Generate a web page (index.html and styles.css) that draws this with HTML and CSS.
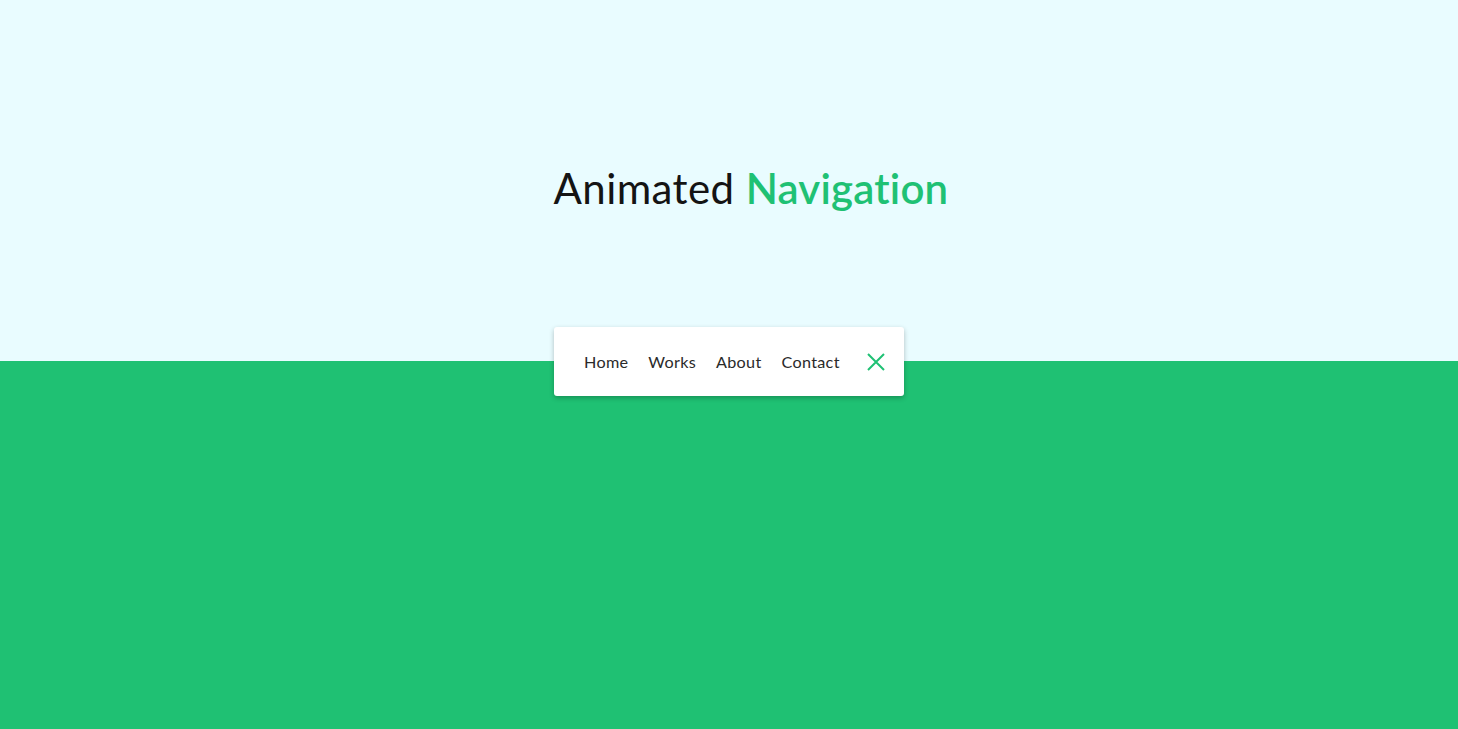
FILE: index.html
```html
<!DOCTYPE html>
<html lang="en">
<head>
<meta charset="utf-8">
<title>Animated Navigation</title>
<link rel="stylesheet" href="styles.css">
</head>
<body>
<div class="page">
  <section class="top">
    <h1 class="title">Animated <span class="accent">Navigation</span></h1>
  </section>
  <section class="bottom"></section>
  <nav class="nav">
    <ul class="nav-list">
      <li><a href="#" class="nav-link">Home</a></li>
      <li><a href="#" class="nav-link">Works</a></li>
      <li><a href="#" class="nav-link">About</a></li>
      <li><a href="#" class="nav-link">Contact</a></li>
    </ul>
    <button class="toggle" aria-label="Close">
      <svg width="18" height="18" viewBox="0 0 18 18"><path d="M1 1 L17 17 M17 1 L1 17" stroke="#1fc174" stroke-width="2" fill="none"/></svg>
    </button>
  </nav>
</div>
</body>
</html>
```
FILE: styles.css
```css
* { box-sizing: border-box; }
html, body { margin: 0; padding: 0; }
body {
  font-family: "Lato", "Noto Sans", sans-serif;
  width: 1458px;
  height: 729px;
  overflow: hidden;
}
.page {
  position: relative;
  display: flex;
  flex-direction: column;
  height: 729px;
}
.top {
  height: 361px;
  background: #e9fcff;
  display: flex;
  justify-content: center;
  padding-top: 158px;
  padding-left: 44px;
}
.title {
  margin: 0;
  font-weight: 400;
  font-size: 42px;
  line-height: 60px;
  color: #141414;
  letter-spacing: 0.4px;
}
.accent { color: #1fc174; font-weight: 600; letter-spacing: 0.2px; }
.bottom {
  flex: 1;
  background: #1fc173;
}
.nav {
  position: absolute;
  left: 554px;
  top: 327px;
  width: 350px;
  height: 69px;
  background: #fff;
  border-radius: 3px;
  box-shadow: 0 2px 5px rgba(0,0,0,0.25);
  display: flex;
  align-items: center;
  padding-left: 30px;
}
.nav-list {
  list-style: none;
  margin: 0;
  padding: 0;
  display: flex;
  gap: 20px;
}
.nav-link {
  text-decoration: none;
  color: #2a2a2a;
  font-size: 16.2px;
  letter-spacing: 0.3px;
}
.toggle {
  margin-left: auto;
  margin-right: 19px;
  border: 0;
  background: none;
  padding: 0;
  width: 18px;
  height: 18px;
  display: flex;
}
```
